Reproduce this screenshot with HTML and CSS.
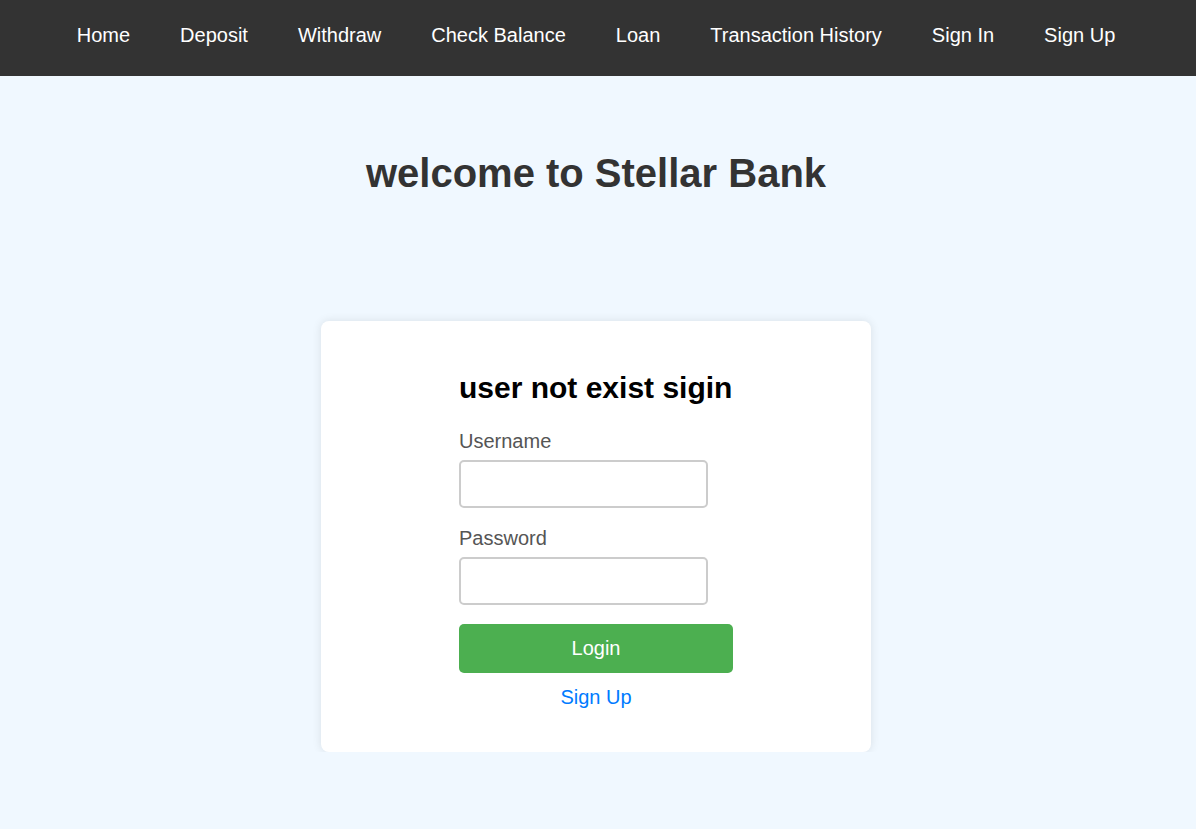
FILE: index.html
```html
<!DOCTYPE html>
<html lang="en">
<head>
<meta charset="utf-8">
<title>Stellar Bank</title>
<link rel="stylesheet" href="styles.css">
</head>
<body>
<nav class="topnav">
  <a href="#">Home</a>
  <a href="#">Deposit</a>
  <a href="#">Withdraw</a>
  <a href="#">Check Balance</a>
  <a href="#">Loan</a>
  <a href="#">Transaction History</a>
  <a href="#">Sign In</a>
  <a href="#">Sign Up</a>
</nav>
<h1 class="welcome">welcome to Stellar Bank</h1>
<main class="wrap">
  <section class="card">
    <form class="login-form">
      <h2 class="form-title">user not exist sigin</h2>
      <label class="field-label" for="username">Username</label>
      <input class="field-input" id="username" type="text">
      <label class="field-label" for="password">Password</label>
      <input class="field-input" id="password" type="password">
      <button class="login-btn" type="button">Login</button>
      <a class="signup-link" href="#">Sign Up</a>
    </form>
  </section>
</main>
</body>
</html>
```
FILE: styles.css
```css
* { box-sizing: border-box; }
body {
  margin: 0;
  background: #f0f8ff;
  font-family: "Liberation Sans", Arial, sans-serif;
}
.topnav {
  height: 76px;
  padding: 0 4px 6px 0;
  background: #333;
  display: flex;
  justify-content: center;
  align-items: center;
  gap: 50px;
}
.topnav a {
  color: #fff;
  text-decoration: none;
  font-size: 20px;
  line-height: 23px;
}
.welcome {
  margin: 74px 0 0;
  padding-right: 4px;
  text-align: center;
  font-size: 40px;
  line-height: 46px;
  color: #333;
}
.wrap {
  display: flex;
  justify-content: center;
  margin-top: 125px;
  padding-right: 4px;
}
.card {
  width: 550px;
  background: #fff;
  border-radius: 8px;
  box-shadow: 0 0 10px rgba(0, 0, 0, 0.1);
  padding: 50px 0 43px;
  display: flex;
  justify-content: center;
}
.login-form {
  width: 274px;
  display: flex;
  flex-direction: column;
  align-items: flex-start;
}
.form-title {
  margin: 0 0 25px;
  font-size: 30px;
  line-height: 34px;
  color: #000;
  white-space: nowrap;
}
.field-label {
  font-size: 20px;
  line-height: 23px;
  color: #555;
  margin-bottom: 7px;
}
.field-input {
  width: 249px;
  height: 48px;
  border: 2px solid #ccc;
  border-radius: 5px;
  margin: 0 0 19px;
  font-size: 18px;
  padding: 0 10px;
  background: #fff;
}
.login-btn {
  width: 100%;
  height: 49px;
  margin-top: 0;
  border: none;
  border-radius: 5px;
  background: #4caf50;
  color: #fff;
  font-family: inherit;
  font-size: 20px;
}
.signup-link {
  align-self: center;
  margin-top: 13px;
  font-size: 20px;
  line-height: 23px;
  color: #007bff;
  text-decoration: none;
}
```
